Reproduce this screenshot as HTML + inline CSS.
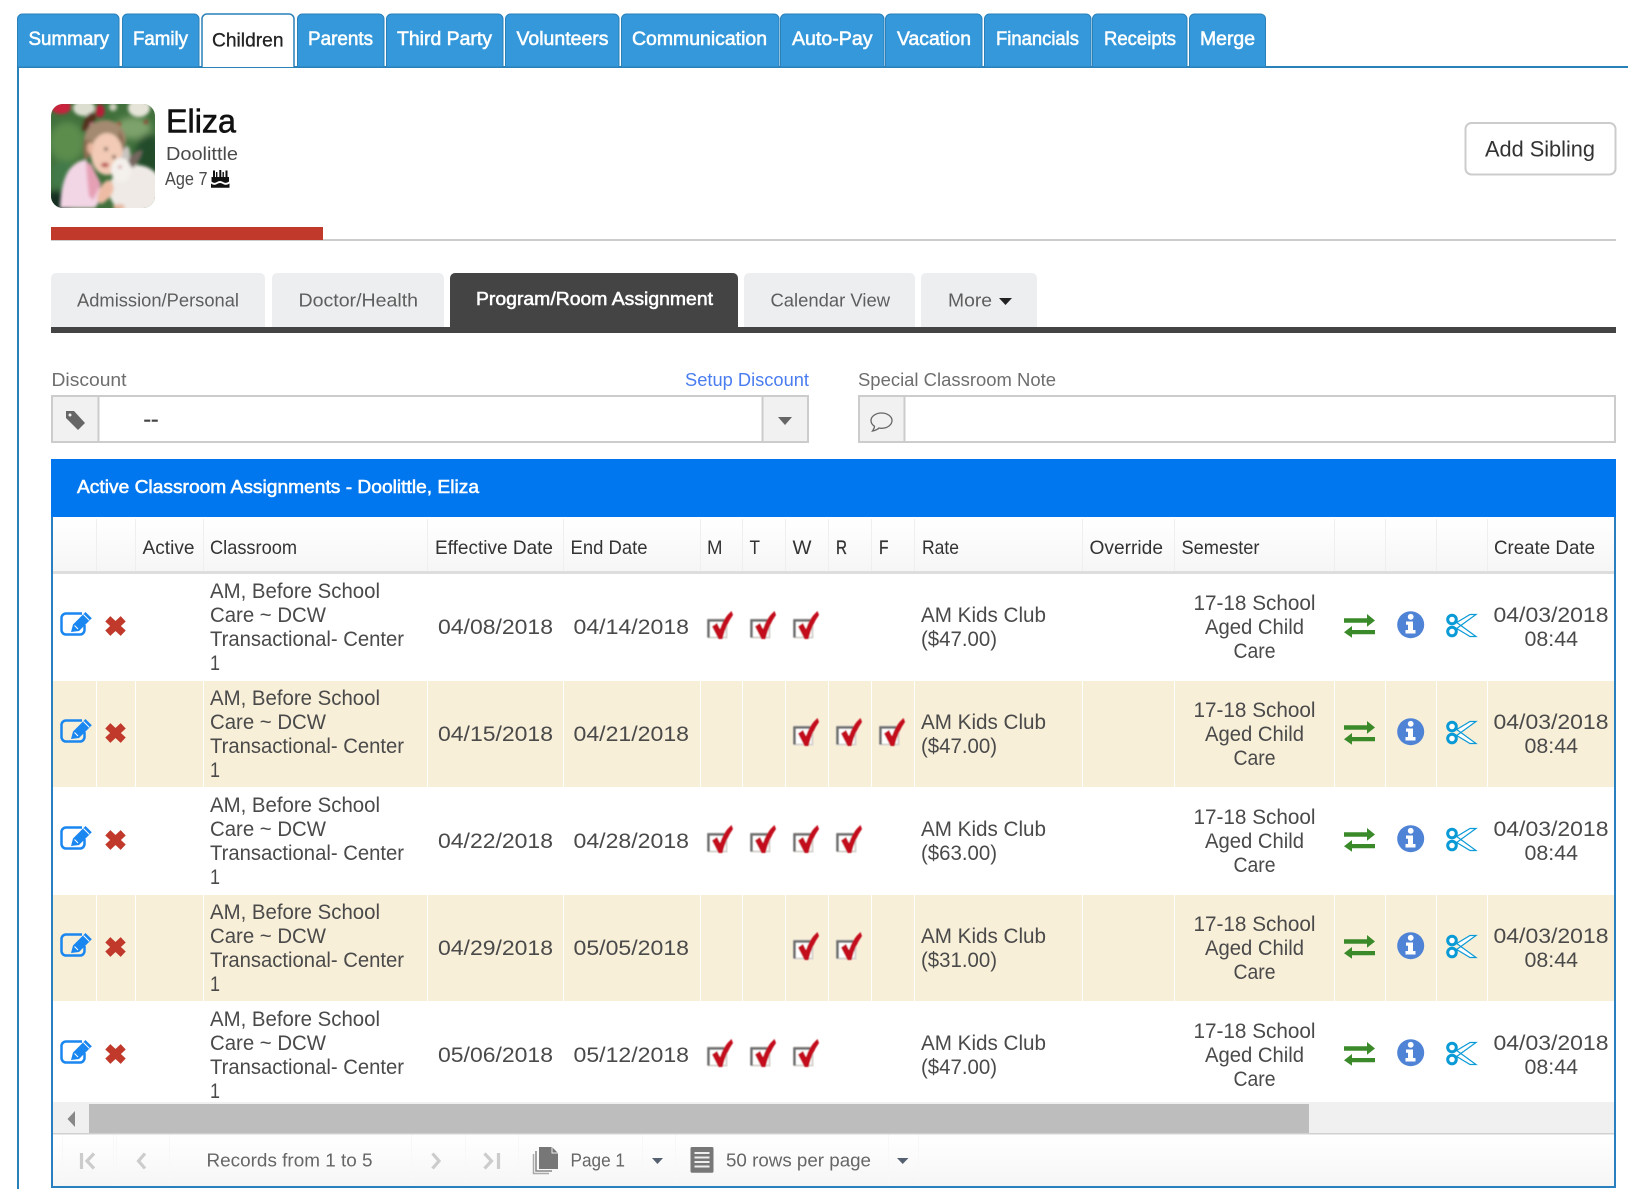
<!DOCTYPE html>
<html lang="en">
<head>
<meta charset="utf-8">
<title>Children - Program/Room Assignment</title>
<style>
html,body{margin:0;padding:0;background:#fff;width:1628px;height:1189px;overflow:hidden}
svg{display:block}
text{font-family:"Liberation Sans",sans-serif;white-space:pre}
.tab{font-size:19px;fill:#fff;stroke:#fff;stroke-width:.55}
.sub{font-size:18.5px;fill:#5e5e5e}
.lbl{font-size:18.5px;fill:#6e6e6e}
.th{font-size:19.5px;fill:#333}
.thn{font-size:19.5px;fill:#333;stroke:#333;stroke-width:.3}
.td{font-size:21px;fill:#4a4a4a}
.ft{font-size:18.5px;fill:#666}
</style>
</head>
<body>
<svg xmlns="http://www.w3.org/2000/svg" width="1628" height="1189" viewBox="0 0 1628 1189">
<defs>
  <linearGradient id="hg" x1="0" y1="0" x2="0" y2="1"><stop offset="0" stop-color="#fff"/><stop offset="1" stop-color="#f6f6f6"/></linearGradient>
  <filter id="bl" x="-10%" y="-10%" width="120%" height="120%"><feGaussianBlur stdDeviation="1.600"/></filter>
  <filter id="bg" x="-20%" y="-20%" width="140%" height="140%"><feGaussianBlur stdDeviation="3.500"/></filter>
  <filter id="sf" x="-10%" y="-10%" width="120%" height="120%"><feGaussianBlur stdDeviation=".4"/></filter>
  <clipPath id="av"><rect x="51" y="104" width="104" height="104" rx="12"/></clipPath>

  <g id="chk" filter="url(#sf)" transform="translate(-1.500 -.500)">
    <rect x="710" y="620" width="18" height="18" fill="#fff" stroke="#d8d4d0" stroke-width="2"/>
    <path d="M710 638V621H726" fill="none" stroke="#707070" stroke-width="2.600"/>
    <path d="M713.500 627L718.500 623.500L721.500 629.500Q725 618.500 733 611.500L734.500 615.500Q727.500 625 724 639.500L720 639.500Z" fill="#c4081c"/>
  </g>

  <g id="icons">
    <!-- edit -->
    <path d="M82 613.500H66a4.500 4.500 0 0 0-4.500 4.500V630a4.500 4.500 0 0 0 4.500 4.500H80a4.500 4.500 0 0 0 4.500-4.500V625" fill="none" stroke="#1a86f0" stroke-width="2.500"/>
    <path d="M71 632L73 624.500L85.500 612L91.800 618.300L79 631Z" fill="#1a86f0"/>
    <path d="M83.500 614.500L89.300 620.300M74.500 625.500L78 629" stroke="#fff" stroke-width="1" fill="none"/>
    <!-- delete -->
    <path d="M107.800 618.800L123.200 633.200M123.200 618.800L107.800 633.200" stroke="#c0392b" stroke-width="7.400" fill="none"/>
    <!-- swap -->
    <path d="M1344 618.300H1367V614L1375 620.500L1367 626.700V622.700H1344Z" fill="#3a8a2a"/>
    <path d="M1375 630H1352V626L1344 632.200L1352 637.800V634.300H1375Z" fill="#3a8a2a"/>
    <!-- info -->
    <circle cx="1410.700" cy="624.700" r="13.500" fill="#4f83d6"/>
    <circle cx="1410.700" cy="616.800" r="2.900" fill="#fff"/>
    <path d="M1406 621.500H1413V630H1415.500V633.500H1405.500V630H1408V624.800H1406Z" fill="#fff"/>
    <!-- scissors -->
    <path d="M1456 622L1476 636.500L1470 636.500L1455 627.500M1456 629L1476 614.500L1470 614.500L1455 623.500" fill="#fff" stroke="#0a9ad6" stroke-width="1.200"/>
    <circle cx="1452" cy="619.500" r="4.300" fill="#fff" stroke="#0a9ad6" stroke-width="3"/>
    <circle cx="1452" cy="631.500" r="4.300" fill="#fff" stroke="#0a9ad6" stroke-width="3"/>
  </g>
</defs>

<!-- top tab content frame -->
<rect x="17" y="66" width="1611" height="2" fill="#2a80b9"/>
<rect x="17" y="66" width="2" height="1123" fill="#2a80b9"/>

<!-- top tabs -->
<g fill="#3498db" stroke="#2a80b9" stroke-width="1">
  <path d="M17.500 67V19a5 5 0 0 1 5-5H114a5 5 0 0 1 5 5V67Z"/>
  <path d="M122.500 67V19a5 5 0 0 1 5-5H194a5 5 0 0 1 5 5V67Z"/>
  <path d="M297.500 67V19a5 5 0 0 1 5-5H379a5 5 0 0 1 5 5V67Z"/>
  <path d="M386.500 67V19a5 5 0 0 1 5-5H498a5 5 0 0 1 5 5V67Z"/>
  <path d="M505.500 67V19a5 5 0 0 1 5-5H614a5 5 0 0 1 5 5V67Z"/>
  <path d="M621.500 67V19a5 5 0 0 1 5-5H774a5 5 0 0 1 5 5V67Z"/>
  <path d="M780.500 67V19a5 5 0 0 1 5-5H879a5 5 0 0 1 5 5V67Z"/>
  <path d="M885.500 67V19a5 5 0 0 1 5-5H977a5 5 0 0 1 5 5V67Z"/>
  <path d="M984.500 67V19a5 5 0 0 1 5-5H1086a5 5 0 0 1 5 5V67Z"/>
  <path d="M1092.500 67V19a5 5 0 0 1 5-5H1182a5 5 0 0 1 5 5V67Z"/>
  <path d="M1189.500 67V19a5 5 0 0 1 5-5H1260a5 5 0 0 1 5.500 5V67Z"/>
</g>
<path d="M202 67V19a5 5 0 0 1 5-5H289a5 5 0 0 1 5 5V67" fill="#fff" stroke="#2a80b9" stroke-width="1.500"/>
<text class="tab" x="28.500" y="45" textLength="80.500" lengthAdjust="spacingAndGlyphs">Summary</text>
<text class="tab" x="133" y="45" textLength="55" lengthAdjust="spacingAndGlyphs">Family</text>
<text x="212" y="46.500" font-size="19" fill="#222" stroke="#222" stroke-width=".3" textLength="71.500" lengthAdjust="spacingAndGlyphs">Children</text>
<text class="tab" x="308" y="45" textLength="65" lengthAdjust="spacingAndGlyphs">Parents</text>
<text class="tab" x="397" y="45" textLength="95" lengthAdjust="spacingAndGlyphs">Third Party</text>
<text class="tab" x="516.500" y="45" textLength="92" lengthAdjust="spacingAndGlyphs">Volunteers</text>
<text class="tab" x="632" y="45" textLength="135" lengthAdjust="spacingAndGlyphs">Communication</text>
<text class="tab" x="792" y="45" textLength="80.500" lengthAdjust="spacingAndGlyphs">Auto-Pay</text>
<text class="tab" x="897" y="45" textLength="74" lengthAdjust="spacingAndGlyphs">Vacation</text>
<text class="tab" x="996" y="45" textLength="83" lengthAdjust="spacingAndGlyphs">Financials</text>
<text class="tab" x="1104" y="45" textLength="72" lengthAdjust="spacingAndGlyphs">Receipts</text>
<text class="tab" x="1200" y="45" textLength="55" lengthAdjust="spacingAndGlyphs">Merge</text>

<!-- avatar -->
<g clip-path="url(#av)">
  <rect x="51" y="104" width="104" height="104" fill="#41703c"/>
  <g filter="url(#bg)" transform="translate(51 104)">
    <ellipse cx="16" cy="38" rx="18" ry="20" fill="#5c8d4e"/>
    <ellipse cx="12" cy="72" rx="13" ry="16" fill="#43794a"/>
    <ellipse cx="6" cy="100" rx="14" ry="14" fill="#162e24"/>
    <ellipse cx="82" cy="24" rx="18" ry="11" fill="#7ea26c"/>
    <ellipse cx="98" cy="52" rx="14" ry="22" fill="#234c2a"/>
  </g>
  <g filter="url(#bl)" transform="translate(51 104)">
    <ellipse cx="10" cy="3" rx="10" ry="7" fill="#c8203c"/>
    <ellipse cx="33" cy="4" rx="11" ry="8" fill="#dcdfd0"/>
    <ellipse cx="49" cy="7" rx="4.500" ry="6.500" fill="#b81e38"/>
    <ellipse cx="88" cy="4" rx="11" ry="9" fill="#e6e4d8"/>
    <ellipse cx="62" cy="3" rx="4" ry="4" fill="#c8ccb8"/>
    <circle cx="68" cy="20" r="2" fill="#a84030"/>
    <circle cx="95" cy="18" r="2" fill="#984030"/>
    <!-- ponytail -->
    <path d="M31 26Q33 10 42 8Q47 12 44 17Q38 20 36 28Z" fill="#54331f"/>
    <circle cx="41" cy="21" r="2.300" fill="#d88098"/>
    <!-- hair -->
    <ellipse cx="54" cy="36" rx="21" ry="20" fill="#a38a70"/>
    <path d="M33 36Q31 48 34 56L40 52L40 36Z" fill="#8c6e52"/>
    <path d="M68 26Q76 36 72 52L66 42Z" fill="#8c6e52"/>
    <!-- body -->
    <path d="M9 104Q10 78 18 66Q26 56 35 56L44 70L52 92L44 104Z" fill="#f3d6e6"/>
    <path d="M35 58L40 60L50 80L42 96L38 92Q36 76 35 58Z" fill="#e6a0b6"/>
    <!-- face -->
    <ellipse cx="56" cy="50" rx="16" ry="21" fill="#f2cab6"/>
    <ellipse cx="39" cy="44" rx="2.800" ry="5.500" fill="#e8b49c"/>
    <circle cx="55" cy="45" r="1.700" fill="#4a3628"/>
    <circle cx="63" cy="53" r="1.700" fill="#4a3628"/>
    <ellipse cx="54" cy="61" rx="4" ry="2.200" fill="#b54a4a"/>
    <!-- rabbit -->
    <ellipse cx="85" cy="86" rx="27" ry="25" fill="#efeae6"/>
    <path d="M70 56Q72 42 77 42Q81 48 78 60Z" fill="#c8c4c0"/>
    <path d="M77 60Q78 48 92 46Q90 56 82 64Z" fill="#74665e"/>
    <ellipse cx="70" cy="66" rx="10" ry="12" fill="#f4f0ec"/>
    <circle cx="69" cy="63" r="1.300" fill="#b03040"/>
    <!-- hand and arm -->
    <path d="M46 96Q48 80 57 76Q64 78 62 88Q58 96 50 100Z" fill="#eebca4"/>
    <ellipse cx="68" cy="103" rx="6" ry="3" fill="#e6b8a0"/>
  </g>
</g>

<!-- name -->
<text x="166" y="132.500" font-size="33.500" fill="#111" stroke="#111" stroke-width=".6" textLength="70" lengthAdjust="spacingAndGlyphs">Eliza</text>
<text x="166" y="160" font-size="18" fill="#4a4a4a" textLength="72" lengthAdjust="spacingAndGlyphs">Doolittle</text>
<text x="165" y="185" font-size="18" fill="#4a4a4a" textLength="42.500" lengthAdjust="spacingAndGlyphs">Age 7</text>
<g fill="#111">
  <rect x="213" y="170.500" width="2" height="7"/><rect x="219.300" y="170" width="2" height="7.500"/><rect x="225.500" y="170.500" width="2" height="7"/>
  <rect x="216" y="172" width="1.400" height="5"/><rect x="222.500" y="172" width="1.400" height="5"/>
  <path d="M211.500 177H229V181.500Q226 184 223 182Q220 180 217 182Q214 184 211.500 181.500Z"/>
  <path d="M211 183.500Q214 186 217 184Q220 182 223 184Q226 186 229.500 183.500V187.800H211Z"/>
</g>

<!-- Add Sibling -->
<rect x="1465.500" y="123" width="150" height="51.500" rx="6" fill="#fff" stroke="#ccc" stroke-width="2"/>
<text x="1485" y="156.500" font-size="22" fill="#333" textLength="110" lengthAdjust="spacingAndGlyphs">Add Sibling</text>

<!-- progress -->
<rect x="51" y="239" width="1565" height="2" fill="#ccc"/>
<rect x="51" y="227" width="272" height="13" fill="#c0392b"/>

<!-- sub tabs -->
<g fill="#edeef0">
  <path d="M51 327V278a5 5 0 0 1 5-5H260a5 5 0 0 1 5 5V327Z"/>
  <path d="M272 327V278a5 5 0 0 1 5-5H439a5 5 0 0 1 5 5V327Z"/>
  <path d="M744 327V278a5 5 0 0 1 5-5H910a5 5 0 0 1 5 5V327Z"/>
  <path d="M921 327V278a5 5 0 0 1 5-5H1032a5 5 0 0 1 5 5V327Z"/>
</g>
<path d="M450 327V278a5 5 0 0 1 5-5H733a5 5 0 0 1 5 5V327Z" fill="#444"/>
<rect x="51" y="327" width="1565" height="6" fill="#444"/>
<text class="sub" x="77" y="306.500" textLength="162" lengthAdjust="spacingAndGlyphs">Admission/Personal</text>
<text class="sub" x="298.500" y="306.500" textLength="119.500" lengthAdjust="spacingAndGlyphs">Doctor/Health</text>
<text x="476" y="305" font-size="18.500" fill="#fff" stroke="#fff" stroke-width=".55" textLength="237" lengthAdjust="spacingAndGlyphs">Program/Room Assignment</text>
<text class="sub" x="770.500" y="306.500" textLength="119.500" lengthAdjust="spacingAndGlyphs">Calendar View</text>
<text class="sub" x="948" y="306.500" textLength="44" lengthAdjust="spacingAndGlyphs">More</text>
<path d="M999 298H1012L1005.500 305Z" fill="#222"/>

<!-- discount -->
<text class="lbl" x="51.500" y="386" textLength="75" lengthAdjust="spacingAndGlyphs">Discount</text>
<text x="685" y="386" font-size="18.500" fill="#4a7df0" textLength="124" lengthAdjust="spacingAndGlyphs">Setup Discount</text>
<rect x="52" y="396" width="756" height="46" fill="#fff" stroke="#ccc" stroke-width="2"/>
<rect x="53" y="397" width="45" height="44" fill="#f1f1f1"/>
<rect x="97.500" y="396" width="2" height="46" fill="#ccc"/>
<rect x="763" y="397" width="44" height="44" fill="#f1f1f1"/>
<rect x="761.500" y="396" width="2" height="46" fill="#ccc"/>
<path d="M66 411H74L85 423L78 430L66 418Z" fill="#666"/>
<circle cx="70" cy="415" r="1.500" fill="#f1f1f1"/>
<text x="143.500" y="426" font-size="20" fill="#444" stroke="#444" stroke-width=".5" textLength="15" lengthAdjust="spacingAndGlyphs">--</text>
<path d="M778 417H792L785 425Z" fill="#666"/>

<!-- note -->
<text class="lbl" x="858" y="386" textLength="198" lengthAdjust="spacingAndGlyphs">Special Classroom Note</text>
<rect x="859" y="396" width="756" height="46" fill="#fff" stroke="#ccc" stroke-width="2"/>
<rect x="860" y="397" width="44" height="44" fill="#f1f1f1"/>
<rect x="903.500" y="396" width="2" height="46" fill="#ccc"/>
<path d="M881.500 413C875.500 413 871 416.500 871 420.500C871 423 872.500 425 874.500 426.300C874.500 428 873.500 429.500 872.500 431C875 430.500 877.500 429.500 879 428C879.800 428.200 880.700 428.300 881.500 428.300C887.500 428.300 892 424.800 892 420.500C892 416.500 887.500 413 881.500 413Z" fill="none" stroke="#666" stroke-width="1.300"/>

<!-- panel -->
<rect x="51" y="459" width="1565" height="58" fill="#0077ef"/>
<text x="77" y="493" font-size="18.500" fill="#fff" stroke="#fff" stroke-width=".55" textLength="402" lengthAdjust="spacingAndGlyphs">Active Classroom Assignments - Doolittle, Eliza</text>
<rect x="53" y="519" width="1561" height="52" fill="url(#hg)"/>
<rect x="53" y="571" width="1561" height="3" fill="#ddd"/>
<g fill="#efefef">
  <rect x="96" y="519" width="1" height="52"/><rect x="135" y="519" width="1" height="52"/><rect x="203" y="519" width="1" height="52"/><rect x="427" y="519" width="1" height="52"/><rect x="563" y="519" width="1" height="52"/><rect x="700" y="519" width="1" height="52"/><rect x="742" y="519" width="1" height="52"/><rect x="785" y="519" width="1" height="52"/><rect x="828" y="519" width="1" height="52"/><rect x="871" y="519" width="1" height="52"/><rect x="914" y="519" width="1" height="52"/><rect x="1082" y="519" width="1" height="52"/><rect x="1174" y="519" width="1" height="52"/><rect x="1334" y="519" width="1" height="52"/><rect x="1385" y="519" width="1" height="52"/><rect x="1436" y="519" width="1" height="52"/><rect x="1487" y="519" width="1" height="52"/>
</g>
<text class="th" x="142.500" y="554" textLength="52" lengthAdjust="spacingAndGlyphs">Active</text>
<text class="th" x="210" y="554" textLength="87" lengthAdjust="spacingAndGlyphs">Classroom</text>
<text class="th" x="435" y="554" textLength="118" lengthAdjust="spacingAndGlyphs">Effective Date</text>
<text class="th" x="570.500" y="554" textLength="77" lengthAdjust="spacingAndGlyphs">End Date</text>
<text class="th" x="707" y="554" textLength="15.500" lengthAdjust="spacingAndGlyphs">M</text>
<text class="th" x="749.500" y="554" textLength="10.500" lengthAdjust="spacingAndGlyphs">T</text>
<text class="th" x="792.500" y="554" textLength="19" lengthAdjust="spacingAndGlyphs">W</text>
<text class="thn" x="836" y="554" textLength="11" lengthAdjust="spacingAndGlyphs">R</text>
<text class="thn" x="879" y="554" textLength="9.500" lengthAdjust="spacingAndGlyphs">F</text>
<text class="th" x="922" y="554" textLength="37" lengthAdjust="spacingAndGlyphs">Rate</text>
<text class="th" x="1089.500" y="554" textLength="73.500" lengthAdjust="spacingAndGlyphs">Override</text>
<text class="th" x="1181.500" y="554" textLength="78" lengthAdjust="spacingAndGlyphs">Semester</text>
<text class="th" x="1494" y="554" textLength="101" lengthAdjust="spacingAndGlyphs">Create Date</text>

<!-- beige rows -->
<rect x="53" y="681" width="1561" height="106" fill="#f8efd9"/>
<rect x="53" y="895" width="1561" height="106" fill="#f8efd9"/>
<g fill="#fff">
  <rect x="96" y="681" width="1" height="106"/><rect x="135" y="681" width="1" height="106"/><rect x="203" y="681" width="1" height="106"/><rect x="427" y="681" width="1" height="106"/><rect x="563" y="681" width="1" height="106"/><rect x="700" y="681" width="1" height="106"/><rect x="742" y="681" width="1" height="106"/><rect x="785" y="681" width="1" height="106"/><rect x="828" y="681" width="1" height="106"/><rect x="871" y="681" width="1" height="106"/><rect x="914" y="681" width="1" height="106"/><rect x="1082" y="681" width="1" height="106"/><rect x="1174" y="681" width="1" height="106"/><rect x="1334" y="681" width="1" height="106"/><rect x="1385" y="681" width="1" height="106"/><rect x="1436" y="681" width="1" height="106"/><rect x="1487" y="681" width="1" height="106"/>
  <rect x="96" y="895" width="1" height="106"/><rect x="135" y="895" width="1" height="106"/><rect x="203" y="895" width="1" height="106"/><rect x="427" y="895" width="1" height="106"/><rect x="563" y="895" width="1" height="106"/><rect x="700" y="895" width="1" height="106"/><rect x="742" y="895" width="1" height="106"/><rect x="785" y="895" width="1" height="106"/><rect x="828" y="895" width="1" height="106"/><rect x="871" y="895" width="1" height="106"/><rect x="914" y="895" width="1" height="106"/><rect x="1082" y="895" width="1" height="106"/><rect x="1174" y="895" width="1" height="106"/><rect x="1334" y="895" width="1" height="106"/><rect x="1385" y="895" width="1" height="106"/><rect x="1436" y="895" width="1" height="106"/><rect x="1487" y="895" width="1" height="106"/>
</g>

<!-- row 1 -->
<g>
  <use href="#icons"/>
  <use href="#chk"/><use href="#chk" x="43"/><use href="#chk" x="86"/>
  <text class="td" x="210" y="598" textLength="170" lengthAdjust="spacingAndGlyphs">AM, Before School</text>
  <text class="td" x="210" y="622" textLength="116" lengthAdjust="spacingAndGlyphs">Care ~ DCW</text>
  <text class="td" x="210" y="646" textLength="194" lengthAdjust="spacingAndGlyphs">Transactional- Center</text>
  <text class="td" x="210" y="670" textLength="10" lengthAdjust="spacingAndGlyphs">1</text>
  <text class="td" x="438" y="634" textLength="115" lengthAdjust="spacingAndGlyphs">04/08/2018</text>
  <text class="td" x="573.500" y="634" textLength="115.500" lengthAdjust="spacingAndGlyphs">04/14/2018</text>
  <text class="td" x="921" y="622" textLength="125" lengthAdjust="spacingAndGlyphs">AM Kids Club</text>
  <text class="td" x="921" y="646" textLength="76" lengthAdjust="spacingAndGlyphs">($47.00)</text>
  <text class="td" x="1193.500" y="610" textLength="122" lengthAdjust="spacingAndGlyphs">17-18 School</text>
  <text class="td" x="1205" y="634" textLength="99" lengthAdjust="spacingAndGlyphs">Aged Child</text>
  <text class="td" x="1233.500" y="658" textLength="42" lengthAdjust="spacingAndGlyphs">Care</text>
  <text class="td" x="1493.500" y="622" textLength="115" lengthAdjust="spacingAndGlyphs">04/03/2018</text>
  <text class="td" x="1524.500" y="646" textLength="53.500" lengthAdjust="spacingAndGlyphs">08:44</text>
</g>
<!-- row 2 -->
<g transform="translate(0 107)">
  <use href="#icons"/>
  <use href="#chk" x="86"/><use href="#chk" x="129"/><use href="#chk" x="172"/>
  <text class="td" x="210" y="598" textLength="170" lengthAdjust="spacingAndGlyphs">AM, Before School</text>
  <text class="td" x="210" y="622" textLength="116" lengthAdjust="spacingAndGlyphs">Care ~ DCW</text>
  <text class="td" x="210" y="646" textLength="194" lengthAdjust="spacingAndGlyphs">Transactional- Center</text>
  <text class="td" x="210" y="670" textLength="10" lengthAdjust="spacingAndGlyphs">1</text>
  <text class="td" x="438" y="634" textLength="115" lengthAdjust="spacingAndGlyphs">04/15/2018</text>
  <text class="td" x="573.500" y="634" textLength="115.500" lengthAdjust="spacingAndGlyphs">04/21/2018</text>
  <text class="td" x="921" y="622" textLength="125" lengthAdjust="spacingAndGlyphs">AM Kids Club</text>
  <text class="td" x="921" y="646" textLength="76" lengthAdjust="spacingAndGlyphs">($47.00)</text>
  <text class="td" x="1193.500" y="610" textLength="122" lengthAdjust="spacingAndGlyphs">17-18 School</text>
  <text class="td" x="1205" y="634" textLength="99" lengthAdjust="spacingAndGlyphs">Aged Child</text>
  <text class="td" x="1233.500" y="658" textLength="42" lengthAdjust="spacingAndGlyphs">Care</text>
  <text class="td" x="1493.500" y="622" textLength="115" lengthAdjust="spacingAndGlyphs">04/03/2018</text>
  <text class="td" x="1524.500" y="646" textLength="53.500" lengthAdjust="spacingAndGlyphs">08:44</text>
</g>
<!-- row 3 -->
<g transform="translate(0 214)">
  <use href="#icons"/>
  <use href="#chk"/><use href="#chk" x="43"/><use href="#chk" x="86"/><use href="#chk" x="129"/>
  <text class="td" x="210" y="598" textLength="170" lengthAdjust="spacingAndGlyphs">AM, Before School</text>
  <text class="td" x="210" y="622" textLength="116" lengthAdjust="spacingAndGlyphs">Care ~ DCW</text>
  <text class="td" x="210" y="646" textLength="194" lengthAdjust="spacingAndGlyphs">Transactional- Center</text>
  <text class="td" x="210" y="670" textLength="10" lengthAdjust="spacingAndGlyphs">1</text>
  <text class="td" x="438" y="634" textLength="115" lengthAdjust="spacingAndGlyphs">04/22/2018</text>
  <text class="td" x="573.500" y="634" textLength="115.500" lengthAdjust="spacingAndGlyphs">04/28/2018</text>
  <text class="td" x="921" y="622" textLength="125" lengthAdjust="spacingAndGlyphs">AM Kids Club</text>
  <text class="td" x="921" y="646" textLength="76" lengthAdjust="spacingAndGlyphs">($63.00)</text>
  <text class="td" x="1193.500" y="610" textLength="122" lengthAdjust="spacingAndGlyphs">17-18 School</text>
  <text class="td" x="1205" y="634" textLength="99" lengthAdjust="spacingAndGlyphs">Aged Child</text>
  <text class="td" x="1233.500" y="658" textLength="42" lengthAdjust="spacingAndGlyphs">Care</text>
  <text class="td" x="1493.500" y="622" textLength="115" lengthAdjust="spacingAndGlyphs">04/03/2018</text>
  <text class="td" x="1524.500" y="646" textLength="53.500" lengthAdjust="spacingAndGlyphs">08:44</text>
</g>
<!-- row 4 -->
<g transform="translate(0 321)">
  <use href="#icons"/>
  <use href="#chk" x="86"/><use href="#chk" x="129"/>
  <text class="td" x="210" y="598" textLength="170" lengthAdjust="spacingAndGlyphs">AM, Before School</text>
  <text class="td" x="210" y="622" textLength="116" lengthAdjust="spacingAndGlyphs">Care ~ DCW</text>
  <text class="td" x="210" y="646" textLength="194" lengthAdjust="spacingAndGlyphs">Transactional- Center</text>
  <text class="td" x="210" y="670" textLength="10" lengthAdjust="spacingAndGlyphs">1</text>
  <text class="td" x="438" y="634" textLength="115" lengthAdjust="spacingAndGlyphs">04/29/2018</text>
  <text class="td" x="573.500" y="634" textLength="115.500" lengthAdjust="spacingAndGlyphs">05/05/2018</text>
  <text class="td" x="921" y="622" textLength="125" lengthAdjust="spacingAndGlyphs">AM Kids Club</text>
  <text class="td" x="921" y="646" textLength="76" lengthAdjust="spacingAndGlyphs">($31.00)</text>
  <text class="td" x="1193.500" y="610" textLength="122" lengthAdjust="spacingAndGlyphs">17-18 School</text>
  <text class="td" x="1205" y="634" textLength="99" lengthAdjust="spacingAndGlyphs">Aged Child</text>
  <text class="td" x="1233.500" y="658" textLength="42" lengthAdjust="spacingAndGlyphs">Care</text>
  <text class="td" x="1493.500" y="622" textLength="115" lengthAdjust="spacingAndGlyphs">04/03/2018</text>
  <text class="td" x="1524.500" y="646" textLength="53.500" lengthAdjust="spacingAndGlyphs">08:44</text>
</g>
<!-- row 5 -->
<g transform="translate(0 428)">
  <use href="#icons"/>
  <use href="#chk"/><use href="#chk" x="43"/><use href="#chk" x="86"/>
  <text class="td" x="210" y="598" textLength="170" lengthAdjust="spacingAndGlyphs">AM, Before School</text>
  <text class="td" x="210" y="622" textLength="116" lengthAdjust="spacingAndGlyphs">Care ~ DCW</text>
  <text class="td" x="210" y="646" textLength="194" lengthAdjust="spacingAndGlyphs">Transactional- Center</text>
  <text class="td" x="210" y="670" textLength="10" lengthAdjust="spacingAndGlyphs">1</text>
  <text class="td" x="438" y="634" textLength="115" lengthAdjust="spacingAndGlyphs">05/06/2018</text>
  <text class="td" x="573.500" y="634" textLength="115.500" lengthAdjust="spacingAndGlyphs">05/12/2018</text>
  <text class="td" x="921" y="622" textLength="125" lengthAdjust="spacingAndGlyphs">AM Kids Club</text>
  <text class="td" x="921" y="646" textLength="76" lengthAdjust="spacingAndGlyphs">($47.00)</text>
  <text class="td" x="1193.500" y="610" textLength="122" lengthAdjust="spacingAndGlyphs">17-18 School</text>
  <text class="td" x="1205" y="634" textLength="99" lengthAdjust="spacingAndGlyphs">Aged Child</text>
  <text class="td" x="1233.500" y="658" textLength="42" lengthAdjust="spacingAndGlyphs">Care</text>
  <text class="td" x="1493.500" y="622" textLength="115" lengthAdjust="spacingAndGlyphs">04/03/2018</text>
  <text class="td" x="1524.500" y="646" textLength="53.500" lengthAdjust="spacingAndGlyphs">08:44</text>
</g>

<!-- scrollbar -->
<rect x="53" y="1102" width="1561" height="31" fill="#f0f0f0"/>
<rect x="89" y="1104" width="1220" height="29" fill="#bdbdbd"/>
<path d="M75 1111V1127L67.500 1119Z" fill="#888"/>
<rect x="53" y="1133" width="1561" height="1.500" fill="#d0d0d0"/>

<!-- footer -->
<rect x="53" y="1134.500" width="1561" height="51.500" fill="url(#hg)"/>
<g fill="#f8f8f8">
  <rect x="62" y="1135" width="1" height="51"/><rect x="113" y="1135" width="1" height="51"/><rect x="116" y="1135" width="1" height="51"/><rect x="169" y="1135" width="1" height="51"/><rect x="411" y="1135" width="1" height="51"/><rect x="465" y="1135" width="1" height="51"/><rect x="518" y="1135" width="1" height="51"/><rect x="642" y="1135" width="1" height="51"/><rect x="675" y="1135" width="1" height="51"/><rect x="888" y="1135" width="1" height="51"/><rect x="918" y="1135" width="1" height="51"/>
</g>
<g fill="none" stroke="#ccc" stroke-width="3.200">
  <path d="M81.500 1153V1169"/>
  <path d="M94 1153.500L87 1161L94 1168.500"/>
  <path d="M145 1153.500L138.500 1161L145 1168.500"/>
  <path d="M432.500 1153.500L439 1161L432.500 1168.500"/>
  <path d="M484.500 1153.500L491.500 1161L484.500 1168.500"/>
  <path d="M498.500 1153V1169"/>
</g>
<text class="ft" x="206.500" y="1166.500" textLength="166" lengthAdjust="spacingAndGlyphs">Records from 1 to 5</text>
<path d="M539 1147H552L558 1153V1169H539Z" fill="#777"/>
<path d="M552 1147V1153H558" fill="none" stroke="#eee" stroke-width="1"/>
<path d="M536 1151V1171H552" fill="none" stroke="#888" stroke-width="1.500"/>
<path d="M533.500 1154V1173.500H549" fill="none" stroke="#aaa" stroke-width="1.500"/>
<text class="ft" x="570.500" y="1166.500" textLength="54.500" lengthAdjust="spacingAndGlyphs">Page 1</text>
<path d="M652 1158H663L657.500 1164Z" fill="#556070"/>
<rect x="690.500" y="1147" width="23" height="25.700" rx="1.500" fill="#777"/>
<g fill="#eee"><rect x="694.500" y="1152" width="15" height="2"/><rect x="694.500" y="1156.500" width="15" height="2"/><rect x="694.500" y="1161" width="15" height="2"/><rect x="694.500" y="1165.500" width="15" height="2"/></g>
<text class="ft" x="726" y="1166.500" textLength="145" lengthAdjust="spacingAndGlyphs">50 rows per page</text>
<path d="M897 1158H908.500L902.700 1164Z" fill="#556070"/>

<!-- panel borders -->
<rect x="51" y="517" width="2" height="671" fill="#2a7fc0"/>
<rect x="1614" y="517" width="2" height="671" fill="#2a7fc0"/>
<rect x="51" y="1186" width="1565" height="2" fill="#2a7fc0"/>
</svg>
</body>
</html>
